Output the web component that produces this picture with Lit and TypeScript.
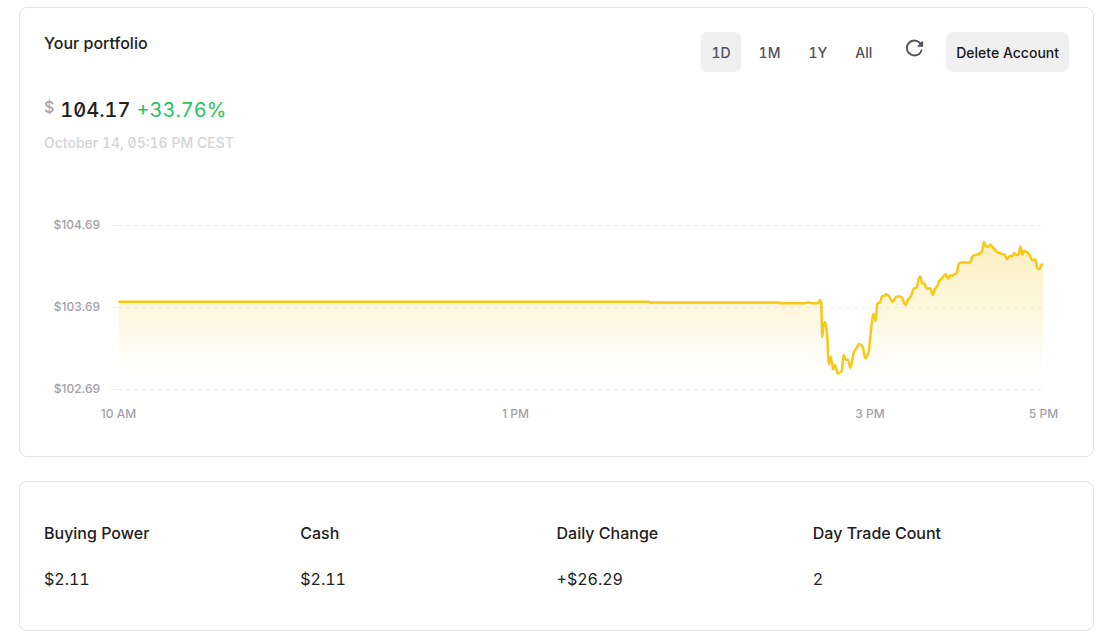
import { LitElement, html, css, svg } from "lit";
import { customElement, property, state } from "lit/decorators.js";

type Point = [number, number];

const SERIES: Point[] = [
  [118.5, 301.7], [648.5, 301.7], [651, 302.6], [779, 302.6], [782, 303.3],
  [804.3, 303.2], [808.3, 302.5], [812.6, 303.2], [818.3, 303], [819.2, 301.3], [820.3, 300],
  [821.3, 304], [822.3, 337], [823.4, 326], [825, 322.3], [826.2, 327],
  [827.3, 337], [828.7, 364.3], [830.7, 356.7], [833, 369.3], [835, 365],
  [837.7, 373.7], [841.7, 371], [843.7, 355], [845.7, 359.7], [848, 359.7],
  [850.3, 367.7], [854, 352.3], [857, 347.3], [859.3, 343.7], [862.7, 346.7],
  [865.3, 358.3], [868.7, 351.7], [871, 330], [873.3, 313.7], [875.7, 321], [877.3, 303.3],
  [880, 302.7], [882, 296.3], [884, 296], [886.3, 294.3], [889, 296.3],
  [892.7, 301.7], [896, 297], [898.7, 296.3], [901.3, 297], [905.7, 305],
  [907.7, 300], [911, 296], [913.7, 288.7], [916.3, 288], [919, 278.3],
  [920.3, 276.3], [922.3, 283.5], [924.7, 283.7], [926.5, 288.7], [930, 288.3],
  [933, 295], [935.3, 288.3], [937.3, 286], [939.3, 280.7], [942, 278.3],
  [945.7, 274.3], [948, 278.7], [950.3, 275.3], [952.7, 275.7], [954, 274.3],
  [956.7, 273.3], [958.7, 264.3], [961, 262.5], [969.3, 262.7], [973.3, 255.7],
  [977.7, 254.3], [982, 251.7], [984, 242], [986.3, 246.7], [988.7, 246.3],
  [990.3, 244.7], [993.3, 248], [994.7, 249], [997, 252.3], [1000, 253],
  [1001.7, 254], [1004, 254.3], [1007.3, 259], [1009.7, 256], [1012, 256.3],
  [1014.3, 253], [1016.3, 255], [1018.7, 254.7], [1020.3, 246.3], [1022.3, 254.7],
  [1024.3, 250.7], [1026.7, 252], [1029.7, 255], [1032.3, 260.3], [1035.3, 259.3],
  [1037.3, 268.3], [1039.3, 269], [1041.3, 265], [1043, 264],
];

const PRICE_TICKS = [
  { label: "$104.69", y: 225.5 },
  { label: "$103.69", y: 307.5 },
  { label: "$102.69", y: 389.5 },
];

const TIME_TICKS = [
  { label: "10 AM", x: 118.5 },
  { label: "1 PM", x: 515.5 },
  { label: "3 PM", x: 870 },
  { label: "5 PM", x: 1043.5 },
];

// Monotone cubic interpolation, so the curve never overshoots a sample.
function monotonePath(points: Point[]): string {
  const n = points.length;
  const slopes = points
    .slice(1)
    .map(([x, y], i) => (y - points[i][1]) / (x - points[i][0]));
  const tangents = points.map((_, i) => {
    if (i === 0) return slopes[0];
    if (i === n - 1) return slopes[n - 2];
    const a = slopes[i - 1];
    const b = slopes[i];
    return a * b <= 0 ? 0 : (2 * a * b) / (a + b);
  });
  let d = `M${points[0][0]},${points[0][1]}`;
  for (let i = 1; i < n; i++) {
    const [x0, y0] = points[i - 1];
    const [x1, y1] = points[i];
    const h = (x1 - x0) / 3;
    d += `C${(x0 + h).toFixed(2)},${(y0 + h * tangents[i - 1]).toFixed(2)} ${(x1 - h).toFixed(2)},${(y1 - h * tangents[i]).toFixed(2)} ${x1},${y1}`;
  }
  return d;
}

@customElement("price-chart")
export class PriceChart extends LitElement {
  @property({ attribute: false }) points: Point[] = SERIES;

  static styles = css`
    :host {
      display: block;
    }
    .chart {
      display: block;
      width: 100%;
      height: auto;
    }
    .grid {
      stroke: #f0f0f1;
      stroke-width: 1;
    }
    .dashed {
      stroke-dasharray: 4 4;
    }
    .line {
      fill: none;
      stroke: #f7c815;
      stroke-width: 2.5;
      stroke-linejoin: round;
    }
    .label {
      fill: #a1a1aa;
      font-family: Inter, sans-serif;
      font-size: 12px;
      font-weight: 500;
      font-variant-numeric: normal;
    }
    .end {
      text-anchor: end;
    }
    .middle {
      text-anchor: middle;
    }
  `;

  render() {
    const line = monotonePath(this.points);
    const first = this.points[0][0];
    const last = this.points[this.points.length - 1][0];
    return html`
      <svg class="chart" viewBox="44 200 1025 232" role="img" aria-label="Portfolio value today">
        <defs>
          <linearGradient id="fade" x1="0" y1="0" x2="0" y2="1">
            <stop offset="0" stop-color="#f0c419" stop-opacity="0.28"></stop>
            <stop offset="0.9" stop-color="#f7c815" stop-opacity="0"></stop>
          </linearGradient>
        </defs>
        ${PRICE_TICKS.map(
          (t) => svg`
            <line class="grid" x1="110" x2="118" y1=${t.y} y2=${t.y}></line>
            <line class="grid dashed" x1="118" x2="1043" y1=${t.y} y2=${t.y}></line>
            <text class="label end" x="100" y=${t.y + 3.5}>${t.label}</text>`
        )}
        <path fill="url(#fade)" d="${line}L${last},389.5L${first},389.5Z"></path>
        <path class="line" d=${line}></path>
        ${TIME_TICKS.map(
          (t) => svg`<text class="label middle" x=${t.x} y="418">${t.label}</text>`
        )}
      </svg>
    `;
  }
}

@customElement("app-root")
export class AppRoot extends LitElement {
  @state() private range = "1D";

  private ranges = ["1D", "1M", "1Y", "All"];

  private stats = [
    { label: "Buying Power", value: "$2.11" },
    { label: "Cash", value: "$2.11" },
    { label: "Daily Change", value: "+$26.29" },
    { label: "Day Trade Count", value: "2" },
  ];

  static styles = css`
    :host {
      display: block;
      font-family: Inter, sans-serif;
      font-size: 16px;
      line-height: 24px;
      color: #202022;
      font-variant-numeric: tabular-nums slashed-zero;
    }
    .page {
      display: flex;
      flex-direction: column;
      gap: 24px;
      padding: 7px 15px 3px 19px;
    }
    .card {
      border: 1px solid #e4e4e5;
      border-radius: 8px;
      padding: 24px;
      background: #fff;
    }
    .header {
      display: flex;
      align-items: flex-start;
      justify-content: space-between;
    }
    .title {
      margin: 0;
      font-size: 16px;
      font-weight: 500;
      line-height: 22px;
    }
    .controls,
    .ranges {
      display: flex;
      align-items: flex-start;
    }
    .ranges {
      gap: 8px;
    }
    .button {
      font: inherit;
      font-variant-numeric: inherit;
      font-size: 14px;
      font-weight: 500;
      line-height: 20px;
      padding: 11px 10px 9px;
      border: 0;
      border-radius: 6px;
      background: transparent;
      color: #52525b;
      cursor: pointer;
    }
    .active {
      background: #f0f0f0;
    }
    .delete {
      border-radius: 8px;
      background: #f0f0f0;
      color: #18181b;
    }
    .refresh {
      display: flex;
      margin: 0 15px 0 17px;
      padding: 6px;
      border: 0;
      background: transparent;
      color: #52525b;
      cursor: pointer;
    }
    .balance {
      display: flex;
      align-items: flex-start;
      gap: 6px;
      margin: 24px 0 9px;
      font-size: 20px;
      line-height: 28px;
    }
    .currency {
      font-size: 16px;
      font-weight: 500;
      line-height: 22px;
      color: #a1a1aa;
    }
    .amount {
      font-weight: 500;
    }
    .gain {
      color: #22c55e;
    }
    .date {
      margin: 0 0 47px;
      font-size: 14px;
      font-weight: 500;
      line-height: 20px;
      color: #d4d4d8;
    }
    .stats {
      display: grid;
      grid-template-columns: repeat(4, 1fr);
      margin: 0;
      padding: 15px 0;
    }
    .stat {
      display: grid;
      gap: 22px;
    }
    .stat-label {
      font-weight: 500;
    }
    .stat-value {
      margin: 0;
    }
  `;

  render() {
    return html`
      <main class="page">
        <section class="card">
          <header class="header">
            <h1 class="title">Your portfolio</h1>
            <div class="controls">
              <div class="ranges" role="group" aria-label="Time range">
                ${this.ranges.map(
                  (r) => html`<button
                    type="button"
                    class="button ${r === this.range ? "active" : ""}"
                    aria-pressed=${r === this.range ? "true" : "false"}
                    @click=${() => (this.range = r)}
                  >${r}</button>`
                )}
              </div>
              <button type="button" class="refresh" aria-label="Refresh">
                <svg width="20" height="20" viewBox="0 0 512 512" fill="none" aria-hidden="true">
                  <path
                    d="M400 148l-21.12-24.57A191.43 191.43 0 00240 64C134 64 48 150 48 256s86 192 192 192a192.09 192.09 0 00181.07-128"
                    stroke="currentColor" stroke-width="50" stroke-linecap="round" stroke-miterlimit="10"
                  ></path>
                  <path
                    d="M464 97.42V208a16 16 0 01-16 16H337.42c-14.26 0-21.4-17.23-11.32-27.31L436.69 86.1C446.77 76 464 83.16 464 97.42z"
                    fill="currentColor"
                  ></path>
                </svg>
              </button>
              <button type="button" class="button delete">Delete Account</button>
            </div>
          </header>
          <div class="balance">
            <span class="currency">$</span>
            <span class="amount">104.17</span>
            <span class="gain">+33.76%</span>
          </div>
          <p class="date">October 14, 05:16 PM CEST</p>
          <price-chart></price-chart>
        </section>
        <section class="card">
          <dl class="stats">
            ${this.stats.map(
              (s) => html`<div class="stat">
                <dt class="stat-label">${s.label}</dt>
                <dd class="stat-value">${s.value}</dd>
              </div>`
            )}
          </dl>
        </section>
      </main>
    `;
  }
}
